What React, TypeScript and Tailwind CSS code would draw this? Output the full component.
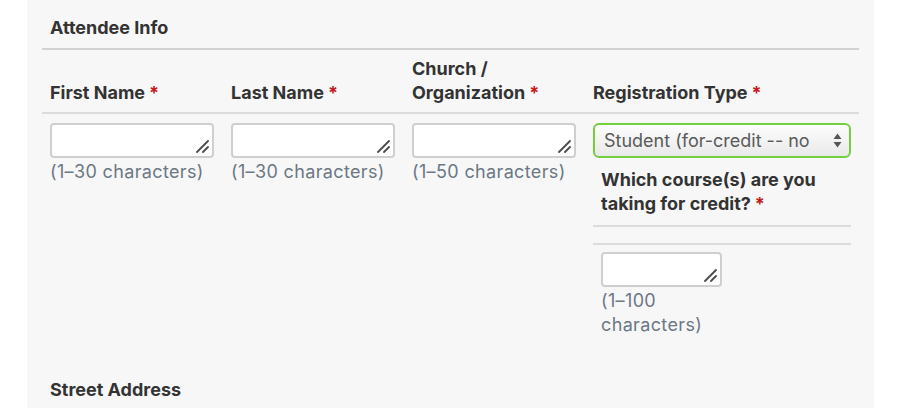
const font = { fontFamily: "Inter, 'Noto Sans', sans-serif" };

const Req = () => <span className="text-[#c41a1a] ml-1">*</span>;

const Box = ({ w }: { w: string }) => (
  <div className={`relative ${w}`}>
    <textarea className="w-full h-[35px] block bg-white border-2 border-[#cfcfcf] rounded-[4px] resize-none outline-none" />
    <svg className="absolute right-[5px] bottom-[5px] pointer-events-none" width="13" height="13" viewBox="0 0 13 13">
      <line x1="1" y1="12" x2="12" y2="1" stroke="#4a4a4a" strokeWidth="1.8" strokeLinecap="round" />
      <line x1="7" y1="12" x2="12" y2="7" stroke="#4a4a4a" strokeWidth="1.8" strokeLinecap="round" />
    </svg>
  </div>
);

const Hint = ({ children, className = "" }: { children: React.ReactNode; className?: string }) => (
  <div className={`mt-[2px] text-[#6b7885] text-[18px] leading-6 tracking-[0.02em] ${className}`}>{children}</div>
);

const cols = [
  { label: "First Name", hint: "(1–30 characters)" },
  { label: "Last Name", hint: "(1–30 characters)" },
  { label: "Church / Organization", hint: "(1–50 characters)" },
];

export default function App() {
  return (
    <div className="w-[914px] h-[408px] bg-white overflow-hidden" style={font}>
      <div className="ml-[27px] w-[847px] h-full bg-[#f7f7f7] px-[15px] pt-[16px] text-[#333] text-[18px]">
        <h2 className="pl-2 pb-[8px] font-bold leading-6 border-b-2 border-[#d2d2d2]">Attendee Info</h2>

        <div className="grid grid-cols-[181px_181px_181px_274px]">
          {cols.map((c) => (
            <div key={c.label} className="flex items-end px-2 pb-[7px] h-[64px] border-b-2 border-[#dcdcdc] font-bold leading-6">
              <span className={c.label.length > 12 ? "w-[160px]" : ""}>
                {c.label}
                <Req />
              </span>
            </div>
          ))}
          <div className="flex items-end px-2 pb-[7px] h-[64px] border-b-2 border-[#dcdcdc] font-bold leading-6">
            <span>
              Registration Type
              <Req />
            </span>
          </div>

          {cols.map((c) => (
            <div key={c.hint + c.label} className="px-2 pt-[9px]">
              <Box w="w-[164px]" />
              <Hint>{c.hint}</Hint>
            </div>
          ))}

          <div className="px-2 pt-[9px]">
            <div className="relative">
              <select className="appearance-none w-full h-[35px] pl-[9px] pr-[30px] rounded-[6px] border-2 border-[#72cf3e] bg-gradient-to-b from-[#fdfdfd] to-[#e9e9e9] text-[#5a5a5a] text-[18px] outline-none">
                <option>Student (for-credit -- no</option>
              </select>
              <svg className="absolute right-[9px] top-[10px] pointer-events-none" width="9" height="15" viewBox="0 0 9 15">
                <path d="M4.5 0.5 L8.5 6 L0.5 6 Z" fill="#555" />
                <path d="M4.5 14.5 L8.5 9 L0.5 9 Z" fill="#555" />
              </svg>
            </div>
            <div className="px-2 pt-[10px] pb-[9px] font-bold leading-6 border-b-2 border-[#dcdcdc]">
              Which course(s) are you taking for credit?
              <Req />
            </div>
            <div className="mt-[16px] border-t-2 border-[#dcdcdc] px-2 pt-[7px]">
              <Box w="w-[121px]" />
              <Hint className="w-[110px]">(1–100 characters)</Hint>
            </div>
          </div>
        </div>

        <h3 className="pl-2 mt-[41px] font-bold leading-6">Street Address</h3>
      </div>
    </div>
  );
}
